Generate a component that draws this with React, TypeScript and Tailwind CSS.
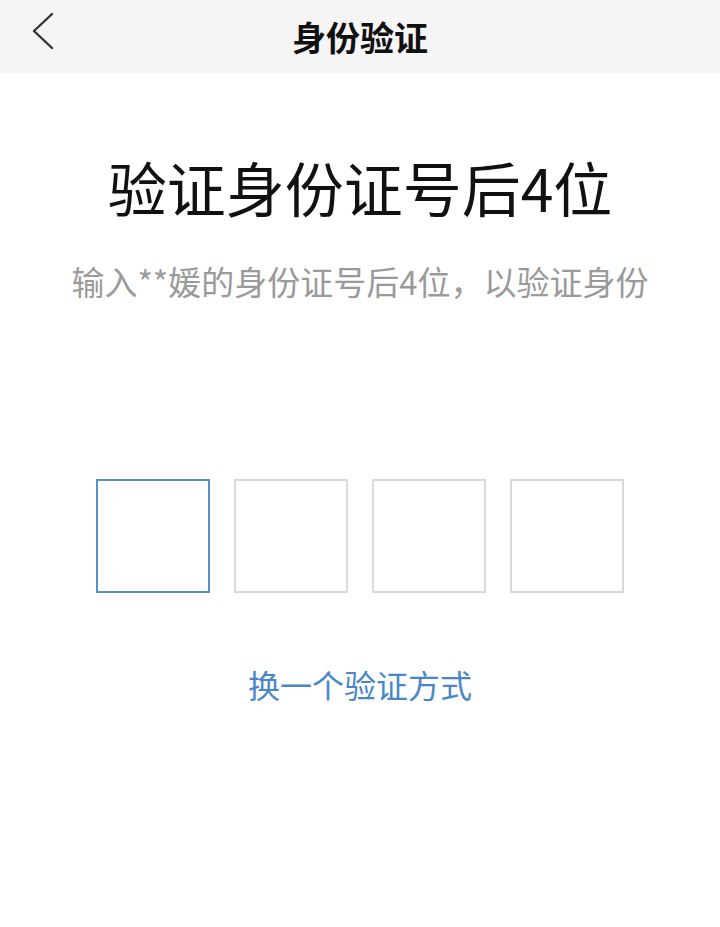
import React from "react";

const font = { fontFamily: '"Noto Sans CJK SC", "Noto Sans", sans-serif' };

export default function App() {
  return (
    <div className="w-[720px] h-[927px] bg-white flex flex-col" style={font}>
      <div className="relative h-[73px] bg-[#f5f5f5] flex items-center justify-center shrink-0">
        <svg className="absolute left-[30px] top-[12px]" width="26" height="38" viewBox="0 0 26 38" fill="none">
          <path d="M22 2 L4 19 L22 36" stroke="#333" strokeWidth="2.4" strokeLinecap="round" strokeLinejoin="round" />
        </svg>
        <span className="text-[34px] font-bold text-[#111] leading-none">身份验证</span>
      </div>
      <div className="flex flex-col items-center">
        <h1 className="mt-[84px] text-[59px] leading-none text-[#111] font-normal">验证身份证号后4位</h1>
        <p className="mt-[49px] text-[33px] leading-none text-[#9a9a9a]">输入**媛的身份证号后4位，以验证身份</p>
        <div className="mt-[181px] flex gap-[24px]">
          <div className="w-[114px] h-[114px] border-2 border-[#5b8ec8]" />
          <div className="w-[114px] h-[114px] border-2 border-[#d9d9d9]" />
          <div className="w-[114px] h-[114px] border-2 border-[#d9d9d9]" />
          <div className="w-[114px] h-[114px] border-2 border-[#d9d9d9]" />
        </div>
        <button className="mt-[75px] text-[32px] leading-none text-[#4a87c8]">换一个验证方式</button>
      </div>
    </div>
  );
}
